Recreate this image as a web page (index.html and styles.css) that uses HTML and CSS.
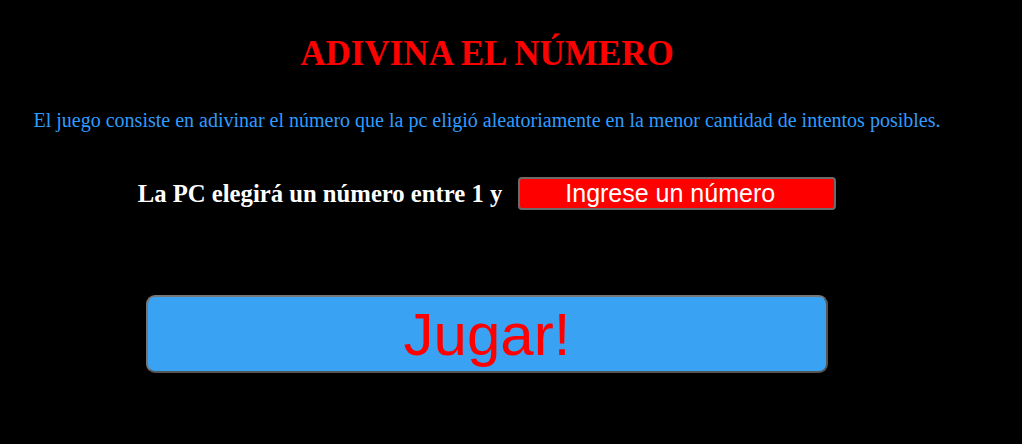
FILE: index.html
```html
<!DOCTYPE html>
<html lang="es">
<head>
<meta charset="utf-8">
<title>Adivina el número</title>
<link rel="stylesheet" href="styles.css">
</head>
<body>
<main class="page">
  <h1 class="title">ADIVINA EL NÚMERO</h1>
  <p class="intro">El juego consiste en adivinar el número que la pc eligió aleatoriamente en la menor cantidad de intentos posibles.</p>
  <div class="range-row">
    <label class="range-label" for="max">La PC elegirá un número entre 1 y</label>
    <input class="range-input" id="max" type="text" value="Ingrese un número">
  </div>
  <div class="play-row">
    <button class="play-btn" type="button">Jugar!</button>
  </div>
</main>
</body>
</html>
```
FILE: styles.css
```css
html, body {
  background: #000;
}
body {
  margin: 8px;
  font-family: "Liberation Serif", "Times New Roman", serif;
}
.page {
  width: 958px;
  display: flex;
  flex-direction: column;
  align-items: center;
}
.title {
  margin: 26px 0 0;
  font-size: 35px;
  font-weight: bold;
  color: #ff0000;
  line-height: 40px;
}
.intro {
  margin: 34px 0 0;
  font-size: 20px;
  line-height: 24px;
  color: #2e9cff;
}
.range-row {
  margin-top: 45px;
  display: flex;
  align-items: center;
  gap: 16px;
}
.range-label {
  font-size: 24.7px;
  font-weight: bold;
  color: #fff;
}
.range-input {
  width: 318px;
  height: 33px;
  box-sizing: border-box;
  background: #ff0000;
  color: #fff;
  border: 2px solid #6b6b6b;
  border-radius: 4px;
  font-family: "Liberation Sans", Arial, sans-serif;
  font-size: 25px;
  padding: 0 0 0 45px;
  text-align: left;
}
.play-row {
  margin-top: 85px;
}
.play-btn {
  width: 682px;
  height: 78px;
  box-sizing: border-box;
  background: #3aa2f3;
  color: #ff0000;
  border: 2px solid #555;
  border-top-color: #777;
  border-left-color: #777;
  border-radius: 9px;
  font-family: "Liberation Sans", Arial, sans-serif;
  font-size: 60px;
  padding: 0;
}
```
